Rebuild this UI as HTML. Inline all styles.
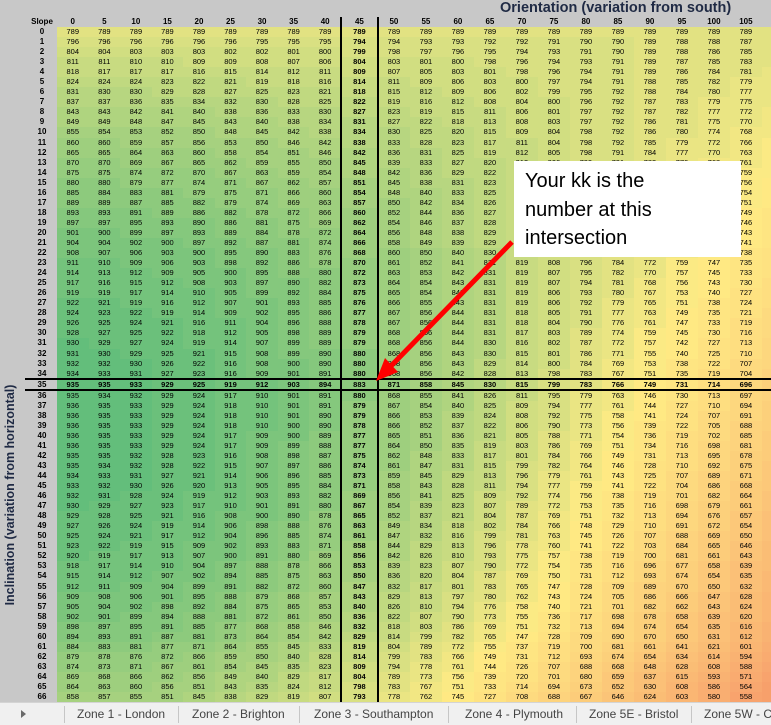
<!DOCTYPE html>
<html><head><meta charset="utf-8">
<style>
body{margin:0;width:771px;height:724px;overflow:hidden;background:#c8c8c8;position:relative;font-family:"Liberation Sans",sans-serif}
#g{position:absolute;left:0;top:17px;width:771px;overflow:hidden}
.r{display:flex;height:10.05px;line-height:10px;font-size:7.5px;color:#000;white-space:nowrap;width:800px}
.r>*{flex:none;text-align:center;font-style:normal;display:block}
.r>b{width:30px;margin-left:27px;font-size:8px}
.r>i{width:31.55px}
.r>i:nth-child(11){width:37px;font-weight:bold}
.r>i:nth-child(n+12){width:32px}
.h{height:10px}.h i{font-weight:bold;font-size:8px}
.k{height:12px;line-height:12px;font-weight:bold}
.a53,.a54{background:#f7a06b}.a55{background:#f8a36d}.a56{background:#f8a76f}.a57{background:#f9ab70}.a58{background:#f9ae71}.a59{background:#f9b272}.a60{background:#fab673}.a61{background:#fab974}.a62{background:#fabd75}.a63{background:#fbc077}.a64{background:#fbc478}.a65{background:#fcc879}.a66{background:#fccc7a}.a67{background:#fcd07b}.a68{background:#fdd37d}.a69{background:#fdd77e}.a70{background:#fdda7f}.a71{background:#fede80}.a72{background:#fee281}.a73{background:#fee582}.a74{background:#ffe983}
.a75{background:#fbea84}.a76{background:#f2e783}.a77{background:#eae583}.a78{background:#e2e282}.a79{background:#d9e082}.a80{background:#d1de81}.a81{background:#c8db81}.a82{background:#c0d980}.a83{background:#b7d680}.a84{background:#afd47f}.a85{background:#a6d17f}.a86{background:#9ecf7e}.a87{background:#96cd7e}.a88{background:#8dca7d}.a89{background:#85c87d}.a90{background:#7cc57c}.a91{background:#74c37c}.a92{background:#6bc07b}.a93{background:#63be7b}
.vl{position:absolute;width:2px;background:#000;top:17px;height:686px}
.hl{position:absolute;left:25px;width:746px;height:2px;background:#000}
#title{position:absolute;left:500px;top:0;font-weight:bold;font-size:14.5px;color:#1f2a44;white-space:nowrap}
#vt{position:absolute;left:10px;top:495px;transform:translate(-50%,-50%) rotate(-90deg);font-weight:bold;font-size:12.5px;color:#1f2a44;white-space:nowrap}
#box{position:absolute;left:514px;top:161px;width:216px;height:90px;background:#fff;padding:6px 0 0 11px;font-size:20px;line-height:28.5px;color:#000;white-space:nowrap}
#tabs{position:absolute;left:0;top:702px;width:771px;height:22px;background:#f0f0f0;border-top:1px solid #d4d4d4;overflow:hidden}
#tabs span{position:absolute;top:4px;font-size:12px;color:#444;white-space:nowrap}
#tabs .s{position:absolute;top:3px;width:1px;height:17px;background:#c6c6c6}
</style></head><body>
<div id="title">Orientation (variation from south)</div>
<div id="vt">Inclination (variation from horizontal)</div>
<div id="g">
<div class="r h"><b>Slope</b><i>0</i><i>5</i><i>10</i><i>15</i><i>20</i><i>25</i><i>30</i><i>35</i><i>40</i><i>45</i><i>50</i><i>55</i><i>60</i><i>65</i><i>70</i><i>75</i><i>80</i><i>85</i><i>90</i><i>95</i><i>100</i><i>105</i><i>110</i></div>
<div class="r"><b>0</b><i class=a78>789</i><i class=a78>789</i><i class=a78>789</i><i class=a78>789</i><i class=a78>789</i><i class=a78>789</i><i class=a78>789</i><i class=a78>789</i><i class=a78>789</i><i class=a78>789</i><i class=a78>789</i><i class=a78>789</i><i class=a78>789</i><i class=a78>789</i><i class=a78>789</i><i class=a78>789</i><i class=a78>789</i><i class=a78>789</i><i class=a78>789</i><i class=a78>789</i><i class=a78>789</i><i class=a78>789</i><i class=a78>789</i></div>
<div class="r"><b>1</b><i class=a79>796</i><i class=a79>796</i><i class=a79>796</i><i class=a79>796</i><i class=a79>796</i><i class=a79>796</i><i class=a79>795</i><i class=a79>795</i><i class=a79>795</i><i class=a79>794</i><i class=a79>794</i><i class=a79>793</i><i class=a79>793</i><i class=a79>792</i><i class=a79>792</i><i class=a79>791</i><i class=a79>790</i><i class=a79>790</i><i class=a78>789</i><i class=a78>788</i><i class=a78>788</i><i class=a78>787</i><i class=a78>787</i></div>
<div class="r"><b>2</b><i class=a80>804</i><i class=a80>804</i><i class=a80>803</i><i class=a80>803</i><i class=a80>803</i><i class=a80>802</i><i class=a80>802</i><i class=a80>801</i><i class=a80>800</i><i class=a79>799</i><i class=a79>798</i><i class=a79>797</i><i class=a79>796</i><i class=a79>795</i><i class=a79>794</i><i class=a79>793</i><i class=a79>791</i><i class=a79>790</i><i class=a78>789</i><i class=a78>788</i><i class=a78>786</i><i class=a78>785</i><i class=a78>784</i></div>
<div class="r"><b>3</b><i class=a81>811</i><i class=a81>811</i><i class=a81>810</i><i class=a81>810</i><i class=a80>809</i><i class=a80>809</i><i class=a80>808</i><i class=a80>807</i><i class=a80>806</i><i class=a80>804</i><i class=a80>803</i><i class=a80>801</i><i class=a80>800</i><i class=a79>798</i><i class=a79>796</i><i class=a79>794</i><i class=a79>793</i><i class=a79>791</i><i class=a78>789</i><i class=a78>787</i><i class=a78>785</i><i class=a78>783</i><i class=a78>781</i></div>
<div class="r"><b>4</b><i class=a81>818</i><i class=a81>817</i><i class=a81>817</i><i class=a81>817</i><i class=a81>816</i><i class=a81>815</i><i class=a81>814</i><i class=a81>812</i><i class=a81>811</i><i class=a80>809</i><i class=a80>807</i><i class=a80>805</i><i class=a80>803</i><i class=a80>801</i><i class=a79>798</i><i class=a79>796</i><i class=a79>794</i><i class=a79>791</i><i class=a78>789</i><i class=a78>786</i><i class=a78>784</i><i class=a78>781</i><i class=a77>779</i></div>
<div class="r"><b>5</b><i class=a82>824</i><i class=a82>824</i><i class=a82>824</i><i class=a82>823</i><i class=a82>822</i><i class=a82>821</i><i class=a81>819</i><i class=a81>818</i><i class=a81>816</i><i class=a81>814</i><i class=a81>811</i><i class=a80>809</i><i class=a80>806</i><i class=a80>803</i><i class=a80>800</i><i class=a79>797</i><i class=a79>794</i><i class=a79>791</i><i class=a78>788</i><i class=a78>785</i><i class=a78>782</i><i class=a77>779</i><i class=a77>776</i></div>
<div class="r"><b>6</b><i class=a83>831</i><i class=a83>830</i><i class=a83>830</i><i class=a82>829</i><i class=a82>828</i><i class=a82>827</i><i class=a82>825</i><i class=a82>823</i><i class=a82>821</i><i class=a81>818</i><i class=a81>815</i><i class=a81>812</i><i class=a80>809</i><i class=a80>806</i><i class=a80>802</i><i class=a79>799</i><i class=a79>795</i><i class=a79>792</i><i class=a78>788</i><i class=a78>784</i><i class=a78>780</i><i class=a77>777</i><i class=a77>773</i></div>
<div class="r"><b>7</b><i class=a83>837</i><i class=a83>837</i><i class=a83>836</i><i class=a83>835</i><i class=a83>834</i><i class=a83>832</i><i class=a83>830</i><i class=a82>828</i><i class=a82>825</i><i class=a82>822</i><i class=a81>819</i><i class=a81>816</i><i class=a81>812</i><i class=a80>808</i><i class=a80>804</i><i class=a80>800</i><i class=a79>796</i><i class=a79>792</i><i class=a78>787</i><i class=a78>783</i><i class=a77>779</i><i class=a77>775</i><i class=a77>771</i></div>
<div class="r"><b>8</b><i class=a84>843</i><i class=a84>843</i><i class=a84>842</i><i class=a84>841</i><i class=a84>840</i><i class=a83>838</i><i class=a83>836</i><i class=a83>833</i><i class=a83>830</i><i class=a82>827</i><i class=a82>823</i><i class=a81>819</i><i class=a81>815</i><i class=a81>811</i><i class=a80>806</i><i class=a80>801</i><i class=a79>797</i><i class=a79>792</i><i class=a78>787</i><i class=a78>782</i><i class=a77>777</i><i class=a77>772</i><i class=a76>768</i></div>
<div class="r"><b>9</b><i class=a84>849</i><i class=a84>849</i><i class=a84>848</i><i class=a84>847</i><i class=a84>845</i><i class=a84>843</i><i class=a84>840</i><i class=a83>838</i><i class=a83>834</i><i class=a83>831</i><i class=a82>827</i><i class=a82>822</i><i class=a81>818</i><i class=a81>813</i><i class=a80>808</i><i class=a80>803</i><i class=a79>797</i><i class=a79>792</i><i class=a78>786</i><i class=a78>781</i><i class=a77>775</i><i class=a77>770</i><i class=a76>765</i></div>
<div class="r"><b>10</b><i class=a85>855</i><i class=a85>854</i><i class=a85>853</i><i class=a85>852</i><i class=a85>850</i><i class=a84>848</i><i class=a84>845</i><i class=a84>842</i><i class=a83>838</i><i class=a83>834</i><i class=a83>830</i><i class=a82>825</i><i class=a82>820</i><i class=a81>815</i><i class=a80>809</i><i class=a80>804</i><i class=a79>798</i><i class=a79>792</i><i class=a78>786</i><i class=a78>780</i><i class=a77>774</i><i class=a76>768</i><i class=a76>762</i></div>
<div class="r"><b>11</b><i class=a86>860</i><i class=a86>860</i><i class=a85>859</i><i class=a85>857</i><i class=a85>856</i><i class=a85>853</i><i class=a85>850</i><i class=a84>846</i><i class=a84>842</i><i class=a83>838</i><i class=a83>833</i><i class=a82>828</i><i class=a82>823</i><i class=a81>817</i><i class=a81>811</i><i class=a80>804</i><i class=a79>798</i><i class=a79>792</i><i class=a78>785</i><i class=a77>779</i><i class=a77>772</i><i class=a76>766</i><i class=a75>759</i></div>
<div class="r"><b>12</b><i class=a86>865</i><i class=a86>865</i><i class=a86>864</i><i class=a86>863</i><i class=a86>860</i><i class=a85>858</i><i class=a85>854</i><i class=a85>851</i><i class=a84>846</i><i class=a84>842</i><i class=a83>836</i><i class=a83>831</i><i class=a82>825</i><i class=a81>819</i><i class=a81>812</i><i class=a80>805</i><i class=a79>798</i><i class=a79>791</i><i class=a78>784</i><i class=a77>777</i><i class=a77>770</i><i class=a76>763</i><i class=a75>757</i></div>
<div class="r"><b>13</b><i class=a87>870</i><i class=a87>870</i><i class=a86>869</i><i class=a86>867</i><i class=a86>865</i><i class=a86>862</i><i class=a85>859</i><i class=a85>855</i><i class=a85>850</i><i class=a84>845</i><i class=a83>839</i><i class=a83>833</i><i class=a82>827</i><i class=a82>820</i><i class=a81>813</i><i class=a80>806</i><i class=a79>799</i><i class=a79>791</i><i class=a78>783</i><i class=a77>776</i><i class=a76>768</i><i class=a76>761</i><i class=a75>754</i></div>
<div class="r"><b>14</b><i class=a87>875</i><i class=a87>875</i><i class=a87>874</i><i class=a87>872</i><i class=a87>870</i><i class=a86>867</i><i class=a86>863</i><i class=a85>859</i><i class=a85>854</i><i class=a84>848</i><i class=a84>842</i><i class=a83>836</i><i class=a82>829</i><i class=a82>822</i><i class=a81>814</i><i class=a80>807</i><i class=a79>799</i><i class=a79>791</i><i class=a78>783</i><i class=a77>774</i><i class=a76>766</i><i class=a75>759</i><i class=a75>751</i></div>
<div class="r"><b>15</b><i class=a88>880</i><i class=a88>880</i><i class=a87>879</i><i class=a87>877</i><i class=a87>874</i><i class=a87>871</i><i class=a86>867</i><i class=a86>862</i><i class=a85>857</i><i class=a85>851</i><i class=a84>845</i><i class=a83>838</i><i class=a83>831</i><i class=a82>823</i><i class=a81>815</i><i class=a80>807</i><i class=a79>799</i><i class=a79>790</i><i class=a78>782</i><i class=a77>773</i><i class=a76>765</i><i class=a75>756</i><i class=a74>748</i></div>
<div class="r"><b>16</b><i class=a88>885</i><i class=a88>884</i><i class=a88>883</i><i class=a88>881</i><i class=a87>879</i><i class=a87>875</i><i class=a87>871</i><i class=a86>866</i><i class=a86>860</i><i class=a85>854</i><i class=a84>848</i><i class=a84>840</i><i class=a83>833</i><i class=a82>825</i><i class=a81>816</i><i class=a80>808</i><i class=a79>799</i><i class=a79>790</i><i class=a78>781</i><i class=a77>771</i><i class=a76>762</i><i class=a75>754</i><i class=a74>745</i></div>
<div class="r"><b>17</b><i class=a88>889</i><i class=a88>889</i><i class=a88>887</i><i class=a88>885</i><i class=a88>882</i><i class=a87>879</i><i class=a87>874</i><i class=a86>869</i><i class=a86>863</i><i class=a85>857</i><i class=a85>850</i><i class=a84>842</i><i class=a83>834</i><i class=a82>826</i><i class=a81>817</i><i class=a80>808</i><i class=a79>799</i><i class=a78>789</i><i class=a78>780</i><i class=a77>770</i><i class=a76>760</i><i class=a75>751</i><i class=a74>742</i></div>
<div class="r"><b>18</b><i class=a89>893</i><i class=a89>893</i><i class=a89>891</i><i class=a88>889</i><i class=a88>886</i><i class=a88>882</i><i class=a87>878</i><i class=a87>872</i><i class=a86>866</i><i class=a86>860</i><i class=a85>852</i><i class=a84>844</i><i class=a83>836</i><i class=a82>827</i><i class=a81>818</i><i class=a80>808</i><i class=a79>798</i><i class=a78>788</i><i class=a77>778</i><i class=a76>768</i><i class=a75>758</i><i class=a74>749</i><i class=a73>739</i></div>
<div class="r"><b>19</b><i class=a89>897</i><i class=a89>897</i><i class=a89>895</i><i class=a89>893</i><i class=a89>890</i><i class=a88>886</i><i class=a88>881</i><i class=a87>875</i><i class=a86>869</i><i class=a86>862</i><i class=a85>854</i><i class=a84>846</i><i class=a83>837</i><i class=a82>828</i><i class=a81>818</i><i class=a80>808</i><i class=a79>798</i><i class=a78>788</i><i class=a77>777</i><i class=a76>767</i><i class=a75>756</i><i class=a74>746</i><i class=a73>736</i></div>
<div class="r"><b>20</b><i class=a90>901</i><i class=a90>900</i><i class=a89>899</i><i class=a89>897</i><i class=a89>893</i><i class=a88>889</i><i class=a88>884</i><i class=a87>878</i><i class=a87>872</i><i class=a86>864</i><i class=a85>856</i><i class=a84>848</i><i class=a83>838</i><i class=a82>829</i><i class=a81>819</i><i class=a80>808</i><i class=a79>798</i><i class=a78>787</i><i class=a77>776</i><i class=a76>765</i><i class=a75>754</i><i class=a74>743</i><i class=a73>733</i></div>
<div class="r"><b>21</b><i class=a90>904</i><i class=a90>904</i><i class=a90>902</i><i class=a90>900</i><i class=a89>897</i><i class=a89>892</i><i class=a88>887</i><i class=a88>881</i><i class=a87>874</i><i class=a86>866</i><i class=a85>858</i><i class=a84>849</i><i class=a83>839</i><i class=a82>829</i><i class=a81>819</i><i class=a80>808</i><i class=a79>797</i><i class=a78>786</i><i class=a77>774</i><i class=a76>763</i><i class=a75>752</i><i class=a74>741</i><i class=a73>730</i></div>
<div class="r"><b>22</b><i class=a90>908</i><i class=a90>907</i><i class=a90>906</i><i class=a90>903</i><i class=a90>900</i><i class=a89>895</i><i class=a89>890</i><i class=a88>883</i><i class=a87>876</i><i class=a86>868</i><i class=a86>860</i><i class=a85>850</i><i class=a84>840</i><i class=a83>830</i><i class=a81>819</i><i class=a80>808</i><i class=a79>796</i><i class=a78>785</i><i class=a77>773</i><i class=a76>761</i><i class=a75>750</i><i class=a73>738</i><i class=a72>727</i></div>
<div class="r"><b>23</b><i class=a91>911</i><i class=a91>910</i><i class=a90>909</i><i class=a90>906</i><i class=a90>903</i><i class=a89>898</i><i class=a89>892</i><i class=a88>886</i><i class=a87>878</i><i class=a87>870</i><i class=a86>861</i><i class=a85>852</i><i class=a84>841</i><i class=a83>831</i><i class=a81>819</i><i class=a80>808</i><i class=a79>796</i><i class=a78>784</i><i class=a77>772</i><i class=a75>759</i><i class=a74>747</i><i class=a73>735</i><i class=a72>724</i></div>
<div class="r"><b>24</b><i class=a91>914</i><i class=a91>913</i><i class=a91>912</i><i class=a90>909</i><i class=a90>905</i><i class=a90>900</i><i class=a89>895</i><i class=a88>888</i><i class=a88>880</i><i class=a87>872</i><i class=a86>863</i><i class=a85>853</i><i class=a84>842</i><i class=a83>831</i><i class=a81>819</i><i class=a80>807</i><i class=a79>795</i><i class=a78>782</i><i class=a77>770</i><i class=a75>757</i><i class=a74>745</i><i class=a73>733</i><i class=a72>721</i></div>
<div class="r"><b>25</b><i class=a91>917</i><i class=a91>916</i><i class=a91>915</i><i class=a91>912</i><i class=a90>908</i><i class=a90>903</i><i class=a89>897</i><i class=a89>890</i><i class=a88>882</i><i class=a87>873</i><i class=a86>864</i><i class=a85>854</i><i class=a84>843</i><i class=a83>831</i><i class=a81>819</i><i class=a80>807</i><i class=a79>794</i><i class=a78>781</i><i class=a76>768</i><i class=a75>756</i><i class=a74>743</i><i class=a73>730</i><i class=a71>718</i></div>
<div class="r"><b>26</b><i class=a91>919</i><i class=a91>919</i><i class=a91>917</i><i class=a91>914</i><i class=a91>910</i><i class=a90>905</i><i class=a89>899</i><i class=a89>892</i><i class=a88>884</i><i class=a87>875</i><i class=a86>865</i><i class=a85>854</i><i class=a84>843</i><i class=a83>831</i><i class=a81>819</i><i class=a80>806</i><i class=a79>793</i><i class=a78>780</i><i class=a76>767</i><i class=a75>753</i><i class=a74>740</i><i class=a72>727</i><i class=a71>715</i></div>
<div class="r"><b>27</b><i class=a92>922</i><i class=a92>921</i><i class=a91>919</i><i class=a91>916</i><i class=a91>912</i><i class=a90>907</i><i class=a90>901</i><i class=a89>893</i><i class=a88>885</i><i class=a87>876</i><i class=a86>866</i><i class=a85>855</i><i class=a84>843</i><i class=a83>831</i><i class=a81>819</i><i class=a80>806</i><i class=a79>792</i><i class=a77>779</i><i class=a76>765</i><i class=a75>751</i><i class=a73>738</i><i class=a72>724</i><i class=a71>711</i></div>
<div class="r"><b>28</b><i class=a92>924</i><i class=a92>923</i><i class=a92>922</i><i class=a91>919</i><i class=a91>914</i><i class=a90>909</i><i class=a90>902</i><i class=a89>895</i><i class=a88>886</i><i class=a87>877</i><i class=a86>867</i><i class=a85>856</i><i class=a84>844</i><i class=a83>831</i><i class=a81>818</i><i class=a80>805</i><i class=a79>791</i><i class=a77>777</i><i class=a76>763</i><i class=a74>749</i><i class=a73>735</i><i class=a72>721</i><i class=a70>708</i></div>
<div class="r"><b>29</b><i class=a92>926</i><i class=a92>925</i><i class=a92>924</i><i class=a92>921</i><i class=a91>916</i><i class=a91>911</i><i class=a90>904</i><i class=a89>896</i><i class=a88>888</i><i class=a87>878</i><i class=a86>867</i><i class=a85>856</i><i class=a84>844</i><i class=a83>831</i><i class=a81>818</i><i class=a80>804</i><i class=a79>790</i><i class=a77>776</i><i class=a76>761</i><i class=a74>747</i><i class=a73>733</i><i class=a71>719</i><i class=a70>705</i></div>
<div class="r"><b>30</b><i class=a92>928</i><i class=a92>927</i><i class=a92>925</i><i class=a92>922</i><i class=a91>918</i><i class=a91>912</i><i class=a90>905</i><i class=a89>898</i><i class=a88>889</i><i class=a87>879</i><i class=a86>868</i><i class=a85>856</i><i class=a84>844</i><i class=a83>831</i><i class=a81>817</i><i class=a80>803</i><i class=a78>789</i><i class=a77>774</i><i class=a75>759</i><i class=a74>745</i><i class=a73>730</i><i class=a71>716</i><i class=a70>702</i></div>
<div class="r"><b>31</b><i class=a93>930</i><i class=a92>929</i><i class=a92>927</i><i class=a92>924</i><i class=a91>919</i><i class=a91>914</i><i class=a90>907</i><i class=a89>899</i><i class=a88>889</i><i class=a87>879</i><i class=a86>868</i><i class=a85>856</i><i class=a84>844</i><i class=a83>830</i><i class=a81>816</i><i class=a80>802</i><i class=a78>787</i><i class=a77>772</i><i class=a75>757</i><i class=a74>742</i><i class=a72>727</i><i class=a71>713</i><i class=a69>698</i></div>
<div class="r"><b>32</b><i class=a93>931</i><i class=a93>930</i><i class=a92>929</i><i class=a92>925</i><i class=a92>921</i><i class=a91>915</i><i class=a90>908</i><i class=a89>899</i><i class=a89>890</i><i class=a88>880</i><i class=a86>868</i><i class=a85>856</i><i class=a84>843</i><i class=a83>830</i><i class=a81>815</i><i class=a80>801</i><i class=a78>786</i><i class=a77>771</i><i class=a75>755</i><i class=a74>740</i><i class=a72>725</i><i class=a71>710</i><i class=a69>695</i></div>
<div class="r"><b>33</b><i class=a93>932</i><i class=a93>932</i><i class=a93>930</i><i class=a92>926</i><i class=a92>922</i><i class=a91>916</i><i class=a90>908</i><i class=a90>900</i><i class=a89>890</i><i class=a88>880</i><i class=a86>868</i><i class=a85>856</i><i class=a84>843</i><i class=a82>829</i><i class=a81>814</i><i class=a80>800</i><i class=a78>784</i><i class=a76>769</i><i class=a75>753</i><i class=a73>738</i><i class=a72>722</i><i class=a70>707</i><i class=a69>692</i></div>
<div class="r"><b>34</b><i class=a93>934</i><i class=a93>933</i><i class=a93>931</i><i class=a92>927</i><i class=a92>923</i><i class=a91>916</i><i class=a90>909</i><i class=a90>901</i><i class=a89>891</i><i class=a88>880</i><i class=a86>868</i><i class=a85>856</i><i class=a84>842</i><i class=a82>828</i><i class=a81>813</i><i class=a79>798</i><i class=a78>783</i><i class=a76>767</i><i class=a75>751</i><i class=a73>735</i><i class=a71>719</i><i class=a70>704</i><i class=a68>689</i></div>
<div class="r k"><b>35</b><i class=a93>935</i><i class=a93>935</i><i class=a93>933</i><i class=a92>929</i><i class=a92>925</i><i class=a91>919</i><i class=a91>912</i><i class=a90>903</i><i class=a89>894</i><i class=a88>883</i><i class=a87>871</i><i class=a85>858</i><i class=a84>845</i><i class=a83>830</i><i class=a81>815</i><i class=a79>799</i><i class=a78>783</i><i class=a76>766</i><i class=a74>749</i><i class=a73>731</i><i class=a71>714</i><i class=a69>696</i><i class=a67>679</i></div>
<div class="r"><b>36</b><i class=a93>935</i><i class=a93>934</i><i class=a93>932</i><i class=a92>929</i><i class=a92>924</i><i class=a91>917</i><i class=a91>910</i><i class=a90>901</i><i class=a89>891</i><i class=a88>880</i><i class=a86>868</i><i class=a85>855</i><i class=a84>841</i><i class=a82>826</i><i class=a81>811</i><i class=a79>795</i><i class=a77>779</i><i class=a76>763</i><i class=a74>746</i><i class=a73>730</i><i class=a71>713</i><i class=a69>697</i><i class=a68>682</i></div>
<div class="r"><b>37</b><i class=a93>936</i><i class=a93>935</i><i class=a93>933</i><i class=a92>929</i><i class=a92>924</i><i class=a91>918</i><i class=a91>910</i><i class=a90>901</i><i class=a89>891</i><i class=a87>879</i><i class=a86>867</i><i class=a85>854</i><i class=a84>840</i><i class=a82>825</i><i class=a80>809</i><i class=a79>794</i><i class=a77>777</i><i class=a76>761</i><i class=a74>744</i><i class=a72>727</i><i class=a71>710</i><i class=a69>694</i><i class=a67>678</i></div>
<div class="r"><b>38</b><i class=a93>936</i><i class=a93>935</i><i class=a93>933</i><i class=a92>929</i><i class=a92>924</i><i class=a91>918</i><i class=a91>910</i><i class=a90>901</i><i class=a89>890</i><i class=a87>879</i><i class=a86>866</i><i class=a85>853</i><i class=a83>839</i><i class=a82>824</i><i class=a80>808</i><i class=a79>792</i><i class=a77>775</i><i class=a75>758</i><i class=a74>741</i><i class=a72>724</i><i class=a70>707</i><i class=a69>691</i><i class=a67>675</i></div>
<div class="r"><b>39</b><i class=a93>936</i><i class=a93>935</i><i class=a93>933</i><i class=a92>929</i><i class=a92>924</i><i class=a91>918</i><i class=a91>910</i><i class=a90>900</i><i class=a89>890</i><i class=a87>878</i><i class=a86>866</i><i class=a85>852</i><i class=a83>837</i><i class=a82>822</i><i class=a80>806</i><i class=a79>790</i><i class=a77>773</i><i class=a75>756</i><i class=a73>739</i><i class=a72>722</i><i class=a70>705</i><i class=a68>688</i><i class=a67>671</i></div>
<div class="r"><b>40</b><i class=a93>936</i><i class=a93>935</i><i class=a93>933</i><i class=a92>929</i><i class=a92>924</i><i class=a91>917</i><i class=a90>909</i><i class=a90>900</i><i class=a88>889</i><i class=a87>877</i><i class=a86>865</i><i class=a85>851</i><i class=a83>836</i><i class=a82>821</i><i class=a80>805</i><i class=a78>788</i><i class=a77>771</i><i class=a75>754</i><i class=a73>736</i><i class=a71>719</i><i class=a70>702</i><i class=a68>685</i><i class=a66>668</i></div>
<div class="r"><b>41</b><i class=a93>936</i><i class=a93>935</i><i class=a93>933</i><i class=a92>929</i><i class=a92>924</i><i class=a91>917</i><i class=a90>909</i><i class=a89>899</i><i class=a88>888</i><i class=a87>877</i><i class=a86>864</i><i class=a85>850</i><i class=a83>835</i><i class=a81>819</i><i class=a80>803</i><i class=a78>786</i><i class=a76>769</i><i class=a75>751</i><i class=a73>734</i><i class=a71>716</i><i class=a69>698</i><i class=a68>681</i><i class=a66>664</i></div>
<div class="r"><b>42</b><i class=a93>935</i><i class=a93>935</i><i class=a93>932</i><i class=a92>928</i><i class=a92>923</i><i class=a91>916</i><i class=a90>908</i><i class=a89>898</i><i class=a88>887</i><i class=a87>875</i><i class=a86>862</i><i class=a84>848</i><i class=a83>833</i><i class=a81>817</i><i class=a80>801</i><i class=a78>784</i><i class=a76>766</i><i class=a74>749</i><i class=a73>731</i><i class=a71>713</i><i class=a69>695</i><i class=a67>678</i><i class=a66>661</i></div>
<div class="r"><b>43</b><i class=a93>935</i><i class=a93>934</i><i class=a93>932</i><i class=a92>928</i><i class=a92>922</i><i class=a91>915</i><i class=a90>907</i><i class=a89>897</i><i class=a88>886</i><i class=a87>874</i><i class=a86>861</i><i class=a84>847</i><i class=a83>831</i><i class=a81>815</i><i class=a79>799</i><i class=a78>782</i><i class=a76>764</i><i class=a74>746</i><i class=a72>728</i><i class=a71>710</i><i class=a69>692</i><i class=a67>675</i><i class=a65>657</i></div>
<div class="r"><b>44</b><i class=a93>934</i><i class=a93>933</i><i class=a93>931</i><i class=a92>927</i><i class=a92>921</i><i class=a91>914</i><i class=a90>906</i><i class=a89>896</i><i class=a88>885</i><i class=a87>873</i><i class=a85>859</i><i class=a84>845</i><i class=a82>829</i><i class=a81>813</i><i class=a79>796</i><i class=a77>779</i><i class=a76>761</i><i class=a74>743</i><i class=a72>725</i><i class=a70>707</i><i class=a68>689</i><i class=a67>671</i><i class=a65>654</i></div>
<div class="r"><b>45</b><i class=a93>933</i><i class=a93>932</i><i class=a93>930</i><i class=a92>926</i><i class=a92>920</i><i class=a91>913</i><i class=a90>905</i><i class=a89>895</i><i class=a88>884</i><i class=a87>871</i><i class=a85>858</i><i class=a84>843</i><i class=a82>828</i><i class=a81>811</i><i class=a79>794</i><i class=a77>777</i><i class=a75>759</i><i class=a74>741</i><i class=a72>722</i><i class=a70>704</i><i class=a68>686</i><i class=a66>668</i><i class=a65>650</i></div>
<div class="r"><b>46</b><i class=a93>932</i><i class=a93>931</i><i class=a92>928</i><i class=a92>924</i><i class=a91>919</i><i class=a91>912</i><i class=a90>903</i><i class=a89>893</i><i class=a88>882</i><i class=a86>869</i><i class=a85>856</i><i class=a84>841</i><i class=a82>825</i><i class=a80>809</i><i class=a79>792</i><i class=a77>774</i><i class=a75>756</i><i class=a73>738</i><i class=a71>719</i><i class=a70>701</i><i class=a68>682</i><i class=a66>664</i><i class=a64>647</i></div>
<div class="r"><b>47</b><i class=a93>930</i><i class=a92>929</i><i class=a92>927</i><i class=a92>923</i><i class=a91>917</i><i class=a91>910</i><i class=a90>901</i><i class=a89>891</i><i class=a88>880</i><i class=a86>867</i><i class=a85>854</i><i class=a83>839</i><i class=a82>823</i><i class=a80>807</i><i class=a78>789</i><i class=a77>772</i><i class=a75>753</i><i class=a73>735</i><i class=a71>716</i><i class=a69>698</i><i class=a67>679</i><i class=a66>661</i><i class=a64>643</i></div>
<div class="r"><b>48</b><i class=a92>929</i><i class=a92>928</i><i class=a92>925</i><i class=a92>921</i><i class=a91>916</i><i class=a90>908</i><i class=a90>900</i><i class=a89>890</i><i class=a87>878</i><i class=a86>865</i><i class=a85>852</i><i class=a83>837</i><i class=a82>821</i><i class=a80>804</i><i class=a78>787</i><i class=a76>769</i><i class=a75>751</i><i class=a73>732</i><i class=a71>713</i><i class=a69>694</i><i class=a67>676</i><i class=a65>657</i><i class=a63>639</i></div>
<div class="r"><b>49</b><i class=a92>927</i><i class=a92>926</i><i class=a92>924</i><i class=a91>919</i><i class=a91>914</i><i class=a90>906</i><i class=a89>898</i><i class=a88>888</i><i class=a87>876</i><i class=a86>863</i><i class=a84>849</i><i class=a83>834</i><i class=a81>818</i><i class=a80>802</i><i class=a78>784</i><i class=a76>766</i><i class=a74>748</i><i class=a72>729</i><i class=a71>710</i><i class=a69>691</i><i class=a67>672</i><i class=a65>654</i><i class=a63>636</i></div>
<div class="r"><b>50</b><i class=a92>925</i><i class=a92>924</i><i class=a92>921</i><i class=a91>917</i><i class=a91>912</i><i class=a90>904</i><i class=a89>896</i><i class=a88>885</i><i class=a87>874</i><i class=a86>861</i><i class=a84>847</i><i class=a83>832</i><i class=a81>816</i><i class=a79>799</i><i class=a78>781</i><i class=a76>763</i><i class=a74>745</i><i class=a72>726</i><i class=a70>707</i><i class=a68>688</i><i class=a66>669</i><i class=a65>650</i><i class=a63>632</i></div>
<div class="r"><b>51</b><i class=a92>923</i><i class=a92>922</i><i class=a91>919</i><i class=a91>915</i><i class=a90>909</i><i class=a90>902</i><i class=a89>893</i><i class=a88>883</i><i class=a87>871</i><i class=a85>858</i><i class=a84>844</i><i class=a82>829</i><i class=a81>813</i><i class=a79>796</i><i class=a77>778</i><i class=a76>760</i><i class=a74>741</i><i class=a72>722</i><i class=a70>703</i><i class=a68>684</i><i class=a66>665</i><i class=a64>646</i><i class=a62>628</i></div>
<div class="r"><b>52</b><i class=a92>920</i><i class=a91>919</i><i class=a91>917</i><i class=a91>913</i><i class=a90>907</i><i class=a90>900</i><i class=a89>891</i><i class=a88>880</i><i class=a86>869</i><i class=a85>856</i><i class=a84>842</i><i class=a82>826</i><i class=a81>810</i><i class=a79>793</i><i class=a77>775</i><i class=a75>757</i><i class=a73>738</i><i class=a71>719</i><i class=a70>700</i><i class=a68>681</i><i class=a66>661</i><i class=a64>643</i><i class=a62>624</i></div>
<div class="r"><b>53</b><i class=a91>918</i><i class=a91>917</i><i class=a91>914</i><i class=a91>910</i><i class=a90>904</i><i class=a89>897</i><i class=a88>888</i><i class=a87>878</i><i class=a86>866</i><i class=a85>853</i><i class=a83>839</i><i class=a82>823</i><i class=a80>807</i><i class=a79>790</i><i class=a77>772</i><i class=a75>754</i><i class=a73>735</i><i class=a71>716</i><i class=a69>696</i><i class=a67>677</i><i class=a65>658</i><i class=a63>639</i><i class=a62>621</i></div>
<div class="r"><b>54</b><i class=a91>915</i><i class=a91>914</i><i class=a91>912</i><i class=a90>907</i><i class=a90>902</i><i class=a89>894</i><i class=a88>885</i><i class=a87>875</i><i class=a86>863</i><i class=a85>850</i><i class=a83>836</i><i class=a82>820</i><i class=a80>804</i><i class=a78>787</i><i class=a76>769</i><i class=a75>750</i><i class=a73>731</i><i class=a71>712</i><i class=a69>693</i><i class=a67>674</i><i class=a65>654</i><i class=a63>635</i><i class=a61>617</i></div>
<div class="r"><b>55</b><i class=a91>912</i><i class=a91>911</i><i class=a90>909</i><i class=a90>904</i><i class=a89>899</i><i class=a89>891</i><i class=a88>882</i><i class=a87>872</i><i class=a86>860</i><i class=a84>847</i><i class=a83>832</i><i class=a81>817</i><i class=a80>801</i><i class=a78>783</i><i class=a76>765</i><i class=a74>747</i><i class=a72>728</i><i class=a70>709</i><i class=a68>689</i><i class=a67>670</i><i class=a65>650</i><i class=a63>632</i><i class=a61>613</i></div>
<div class="r"><b>56</b><i class=a90>909</i><i class=a90>908</i><i class=a90>906</i><i class=a90>901</i><i class=a89>895</i><i class=a88>888</i><i class=a87>879</i><i class=a86>868</i><i class=a85>857</i><i class=a84>843</i><i class=a82>829</i><i class=a81>813</i><i class=a79>797</i><i class=a78>780</i><i class=a76>762</i><i class=a74>743</i><i class=a72>724</i><i class=a70>705</i><i class=a68>686</i><i class=a66>666</i><i class=a64>647</i><i class=a62>628</i><i class=a60>609</i></div>
<div class="r"><b>57</b><i class=a90>905</i><i class=a90>904</i><i class=a90>902</i><i class=a89>898</i><i class=a89>892</i><i class=a88>884</i><i class=a87>875</i><i class=a86>865</i><i class=a85>853</i><i class=a84>840</i><i class=a82>826</i><i class=a81>810</i><i class=a79>794</i><i class=a77>776</i><i class=a75>758</i><i class=a74>740</i><i class=a72>721</i><i class=a70>701</i><i class=a68>682</i><i class=a66>662</i><i class=a64>643</i><i class=a62>624</i><i class=a60>605</i></div>
<div class="r"><b>58</b><i class=a90>902</i><i class=a90>901</i><i class=a89>899</i><i class=a89>894</i><i class=a88>888</i><i class=a88>881</i><i class=a87>872</i><i class=a86>861</i><i class=a85>850</i><i class=a83>836</i><i class=a82>822</i><i class=a80>807</i><i class=a79>790</i><i class=a77>773</i><i class=a75>755</i><i class=a73>736</i><i class=a71>717</i><i class=a69>698</i><i class=a67>678</i><i class=a65>658</i><i class=a63>639</i><i class=a62>620</i><i class=a60>601</i></div>
<div class="r"><b>59</b><i class=a89>898</i><i class=a89>897</i><i class=a89>895</i><i class=a89>891</i><i class=a88>885</i><i class=a87>877</i><i class=a86>868</i><i class=a85>858</i><i class=a84>846</i><i class=a83>832</i><i class=a81>818</i><i class=a80>803</i><i class=a78>786</i><i class=a76>769</i><i class=a75>751</i><i class=a73>732</i><i class=a71>713</i><i class=a69>694</i><i class=a67>674</i><i class=a65>654</i><i class=a63>635</i><i class=a61>616</i><i class=a59>597</i></div>
<div class="r"><b>60</b><i class=a89>894</i><i class=a89>893</i><i class=a89>891</i><i class=a88>887</i><i class=a88>881</i><i class=a87>873</i><i class=a86>864</i><i class=a85>854</i><i class=a84>842</i><i class=a82>829</i><i class=a81>814</i><i class=a79>799</i><i class=a78>782</i><i class=a76>765</i><i class=a74>747</i><i class=a72>728</i><i class=a70>709</i><i class=a69>690</i><i class=a67>670</i><i class=a65>650</i><i class=a63>631</i><i class=a61>612</i><i class=a59>594</i></div>
<div class="r"><b>61</b><i class=a88>884</i><i class=a88>883</i><i class=a88>881</i><i class=a87>877</i><i class=a87>871</i><i class=a86>864</i><i class=a85>855</i><i class=a84>845</i><i class=a83>833</i><i class=a81>819</i><i class=a80>804</i><i class=a78>789</i><i class=a77>772</i><i class=a75>755</i><i class=a73>737</i><i class=a71>719</i><i class=a70>700</i><i class=a68>681</i><i class=a66>661</i><i class=a64>641</i><i class=a62>621</i><i class=a60>601</i><i class=a58>582</i></div>
<div class="r"><b>62</b><i class=a87>879</i><i class=a87>878</i><i class=a87>876</i><i class=a87>872</i><i class=a86>866</i><i class=a85>859</i><i class=a85>850</i><i class=a84>840</i><i class=a82>828</i><i class=a81>814</i><i class=a79>799</i><i class=a78>783</i><i class=a76>766</i><i class=a74>749</i><i class=a73>731</i><i class=a71>712</i><i class=a69>693</i><i class=a67>674</i><i class=a65>654</i><i class=a63>634</i><i class=a61>614</i><i class=a59>594</i><i class=a57>575</i></div>
<div class="r"><b>63</b><i class=a87>874</i><i class=a87>873</i><i class=a87>871</i><i class=a86>867</i><i class=a86>861</i><i class=a85>854</i><i class=a84>845</i><i class=a83>835</i><i class=a82>823</i><i class=a80>809</i><i class=a79>794</i><i class=a77>778</i><i class=a76>761</i><i class=a74>744</i><i class=a72>726</i><i class=a70>707</i><i class=a68>688</i><i class=a66>668</i><i class=a64>648</i><i class=a62>628</i><i class=a60>608</i><i class=a58>588</i><i class=a56>569</i></div>
<div class="r"><b>64</b><i class=a86>869</i><i class=a86>868</i><i class=a86>866</i><i class=a86>862</i><i class=a85>856</i><i class=a84>849</i><i class=a84>840</i><i class=a82>829</i><i class=a81>817</i><i class=a80>804</i><i class=a78>789</i><i class=a77>773</i><i class=a75>756</i><i class=a73>739</i><i class=a72>720</i><i class=a70>701</i><i class=a68>680</i><i class=a65>659</i><i class=a63>637</i><i class=a61>615</i><i class=a59>593</i><i class=a57>571</i><i class=a55>550</i></div>
<div class="r"><b>65</b><i class=a86>864</i><i class=a86>863</i><i class=a86>860</i><i class=a85>856</i><i class=a85>851</i><i class=a84>843</i><i class=a83>835</i><i class=a82>824</i><i class=a81>812</i><i class=a79>798</i><i class=a78>783</i><i class=a76>767</i><i class=a75>751</i><i class=a73>733</i><i class=a71>714</i><i class=a69>694</i><i class=a67>673</i><i class=a65>652</i><i class=a63>630</i><i class=a60>608</i><i class=a58>586</i><i class=a56>564</i><i class=a54>543</i></div>
<div class="r"><b>66</b><i class=a85>858</i><i class=a85>857</i><i class=a85>855</i><i class=a85>851</i><i class=a84>845</i><i class=a83>838</i><i class=a82>829</i><i class=a81>819</i><i class=a80>807</i><i class=a79>793</i><i class=a77>778</i><i class=a76>762</i><i class=a74>745</i><i class=a72>727</i><i class=a70>708</i><i class=a68>688</i><i class=a66>667</i><i class=a64>646</i><i class=a62>624</i><i class=a60>603</i><i class=a58>580</i><i class=a55>558</i><i class=a53>537</i></div>
</div>
<div class="vl" style="left:340px"></div>
<div class="vl" style="left:377px"></div>
<div class="hl" style="top:378px"></div>
<div class="hl" style="top:389px"></div>
<div id="box">Your kk is the<br>number at this<br>intersection</div>
<svg style="position:absolute;left:0;top:0" width="771" height="724">
<line x1="512" y1="242" x2="390" y2="367" stroke="#ff0000" stroke-width="5"/>
<polygon points="376,381 398,372 385,358" fill="#ff0000"/>
</svg>
<div id="tabs">
<svg style="position:absolute;left:21px;top:7px" width="6" height="8"><polygon points="0,0 5,4 0,8" fill="#6a6a6a"/></svg>
<div class="s" style="left:64px"></div><span style="left:77px">Zone 1 - London</span>
<div class="s" style="left:178px"></div><span style="left:192px">Zone 2 - Brighton</span>
<div class="s" style="left:299px"></div><span style="left:314px">Zone 3 - Southampton</span>
<div class="s" style="left:448px"></div><span style="left:465px">Zone 4 - Plymouth</span>
<div class="s" style="left:576px"></div><span style="left:589px">Zone 5E - Bristol</span>
<div class="s" style="left:691px"></div><span style="left:704px">Zone 5W - Cornwall</span>
</div>
</body></html>
